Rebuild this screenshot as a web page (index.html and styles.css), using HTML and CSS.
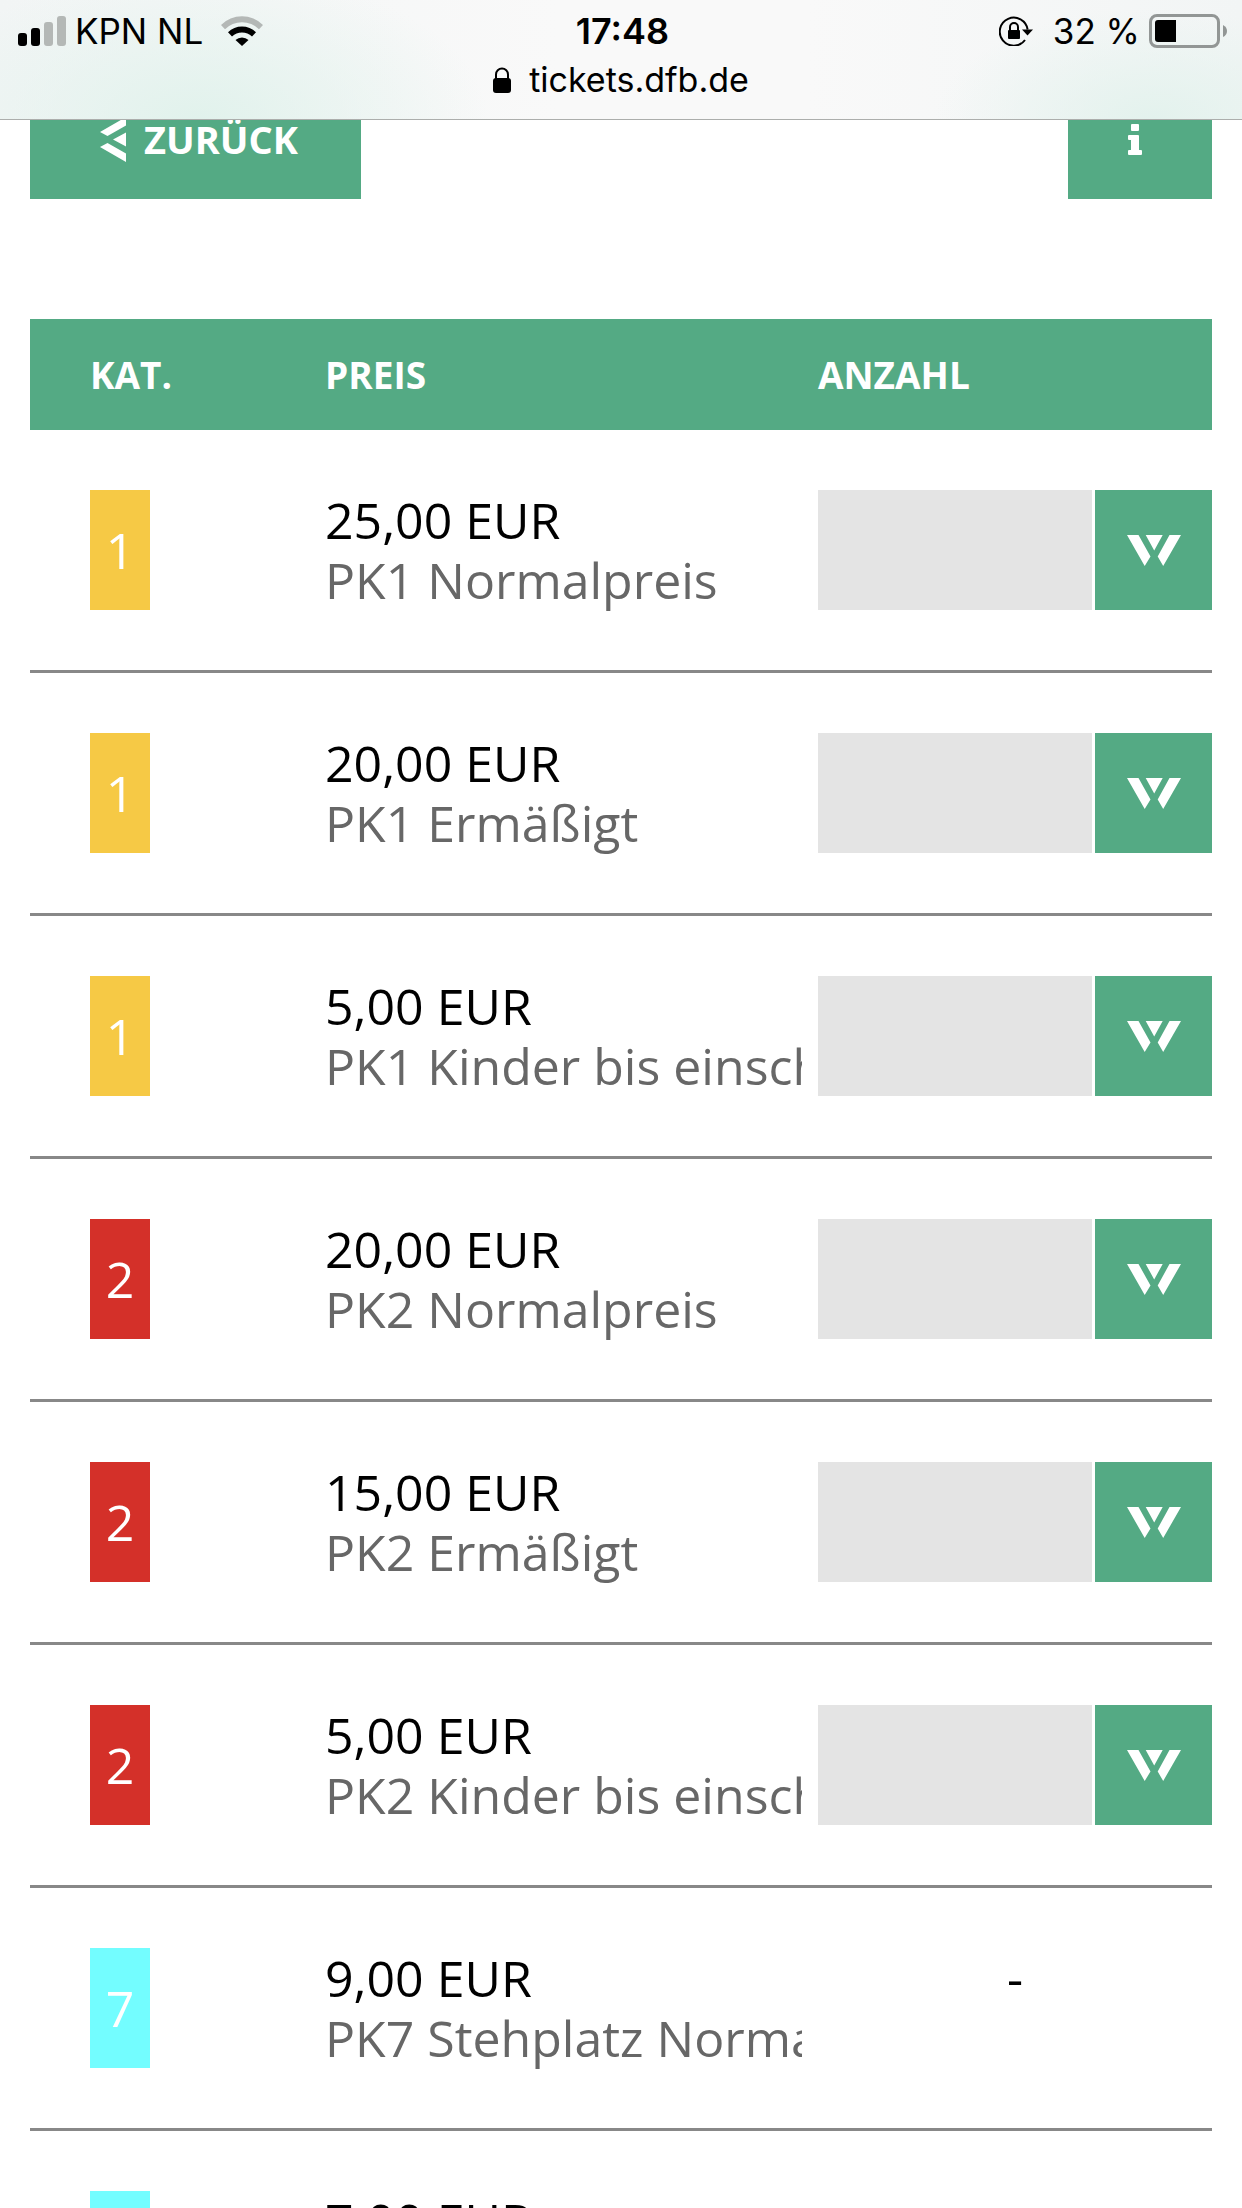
FILE: index.html
```html
<!DOCTYPE html>
<html lang="de">
<head>
  <meta charset="UTF-8" />
  <meta name="viewport" content="width=device-width, initial-scale=1.0" />
  <title>tickets.dfb.de</title>
  <link rel="stylesheet" href="styles.css">
</head>
<body>
  <svg class="sprite" aria-hidden="true">
    <symbol id="chevron-down" viewBox="0 0 54 31">
      <path d="M0 0H11.5L23.5 21.5L17.7 31ZM18.7 0H35.7L27.2 15.5ZM54 0H42.5L30.7 21.5L36.2 31Z" />
    </symbol>
  </svg>

  <header class="browser-bar">
    <div class="status">
      <div class="status-left">
        <svg class="signal" width="48" height="30" viewBox="0 0 48 30" aria-hidden="true">
          <rect x="0" y="17" width="9" height="13" rx="3" />
          <rect x="13" y="12" width="9" height="18" rx="3" />
          <rect class="dim" x="26" y="6" width="9" height="24" rx="3" />
          <rect class="dim" x="39" y="0" width="9" height="30" rx="3" />
        </svg>
        <span>KPN NL</span>
        <svg class="wifi" width="42" height="30" viewBox="0 0 42 30" aria-hidden="true">
          <path class="dim" d="M0 9A29.7 29.7 0 0 1 42 9L38 13.2A24 24 0 0 0 4 13.2Z" />
          <path d="M7 16.200A20 20 0 0 1 35 16.200L31 20.500A14.500 14.500 0 0 0 11 20.500Z" />
          <path d="M14.500 24A9.500 9.500 0 0 1 27.500 24L21 30Z" />
        </svg>
      </div>
      <time class="clock">17:48</time>
      <div class="status-right">
        <svg class="rotation" width="34" height="30" viewBox="0 0 34 30" aria-hidden="true">
          <path class="ring" d="M26 24A14 14 0 1 1 28.600 13.500" />
          <path d="M23 13.500H34L28.500 19.500Z" />
          <rect x="9" y="14" width="12" height="9" rx="1" />
          <path class="shackle" d="M11 14.500V11A4 4 0 0 1 19 11V14.500" />
        </svg>
        <span>32 %</span>
        <svg class="battery" width="78" height="34" viewBox="0 0 78 34" aria-hidden="true">
          <rect class="case" x="1.500" y="1.500" width="68" height="31" rx="6.500" />
          <path class="level" d="M9 6H27V28H9Q6 28 6 25V9Q6 6 9 6Z" />
          <path class="nub" d="M74 11Q78 13 78 17T74 23Z" />
        </svg>
      </div>
    </div>
    <div class="address">
      <svg width="18" height="26" viewBox="0 0 18 26" aria-hidden="true">
        <rect x="0" y="11" width="18" height="15" rx="3" />
        <path class="shackle" d="M3 12V7.500A6 6 0 0 1 15 7.500V12" />
      </svg>
      <span>tickets.dfb.de</span>
    </div>
  </header>

  <main>
    <nav class="toolbar">
      <button type="button" class="btn btn-back">
        <svg width="26" height="45" viewBox="0 0 26 45" aria-hidden="true">
          <path d="M0 15L26 0V8.500L7.500 19ZM13 22.500L26 15.500V29.500ZM0 30L7.500 26L26 36.500V45Z" />
        </svg>
        ZURÜCK
      </button>
      <button type="button" class="btn btn-info" aria-label="Info">
        <svg width="14" height="31" viewBox="0 0 14 31" aria-hidden="true">
          <path d="M4 0H10Q11 0 11 1V6Q11 7 10 7H4Q3 7 3 6V1Q3 0 4 0ZM1 11H10Q11 11 11 12V26H13Q14 26 14 27V30Q14 31 13 31H1Q0 31 0 30V27Q0 26 1 26H3V16H1Q0 16 0 15V12Q0 11 1 11Z" />
        </svg>
      </button>
    </nav>

    <table class="prices">
      <thead>
        <tr>
          <th class="col-kat">KAT.</th>
          <th class="col-preis">PREIS</th>
          <th class="col-anzahl">ANZAHL</th>
        </tr>
      </thead>
      <tbody>
        <tr>
          <td class="col-kat"><span class="kat kat-1">1</span></td>
          <td class="col-preis"><div class="price">25,00 EUR</div><div class="desc">PK1 Normalpreis</div></td>
          <td><div class="amount"><select aria-label="Anzahl PK1 Normalpreis"><option></option></select><span class="arrow"><svg><use href="#chevron-down" /></svg></span></div></td>
        </tr>
        <tr>
          <td class="col-kat"><span class="kat kat-1">1</span></td>
          <td class="col-preis"><div class="price">20,00 EUR</div><div class="desc">PK1 Ermäßigt</div></td>
          <td><div class="amount"><select aria-label="Anzahl PK1 Ermäßigt"><option></option></select><span class="arrow"><svg><use href="#chevron-down" /></svg></span></div></td>
        </tr>
        <tr>
          <td class="col-kat"><span class="kat kat-1">1</span></td>
          <td class="col-preis"><div class="price">5,00 EUR</div><div class="desc">PK1 Kinder bis einsch</div></td>
          <td><div class="amount"><select aria-label="Anzahl PK1 Kinder"><option></option></select><span class="arrow"><svg><use href="#chevron-down" /></svg></span></div></td>
        </tr>
        <tr>
          <td class="col-kat"><span class="kat kat-2">2</span></td>
          <td class="col-preis"><div class="price">20,00 EUR</div><div class="desc">PK2 Normalpreis</div></td>
          <td><div class="amount"><select aria-label="Anzahl PK2 Normalpreis"><option></option></select><span class="arrow"><svg><use href="#chevron-down" /></svg></span></div></td>
        </tr>
        <tr>
          <td class="col-kat"><span class="kat kat-2">2</span></td>
          <td class="col-preis"><div class="price">15,00 EUR</div><div class="desc">PK2 Ermäßigt</div></td>
          <td><div class="amount"><select aria-label="Anzahl PK2 Ermäßigt"><option></option></select><span class="arrow"><svg><use href="#chevron-down" /></svg></span></div></td>
        </tr>
        <tr>
          <td class="col-kat"><span class="kat kat-2">2</span></td>
          <td class="col-preis"><div class="price">5,00 EUR</div><div class="desc">PK2 Kinder bis einsch</div></td>
          <td><div class="amount"><select aria-label="Anzahl PK2 Kinder"><option></option></select><span class="arrow"><svg><use href="#chevron-down" /></svg></span></div></td>
        </tr>
        <tr>
          <td class="col-kat"><span class="kat kat-7">7</span></td>
          <td class="col-preis"><div class="price">9,00 EUR</div><div class="desc">PK7 Stehplatz Normal</div></td>
          <td class="none">-</td>
        </tr>
        <tr>
          <td class="col-kat"><span class="kat kat-7"></span></td>
          <td class="col-preis"><div class="price">7,00 EUR</div></td>
          <td></td>
        </tr>
      </tbody>
    </table>
  </main>
</body>
</html>
```
FILE: styles.css
```css
* {
  box-sizing: border-box;
}
body {
  margin: 0;
  background: #fff;
  color: #000;
  font-family: "Open Sans", sans-serif;
  font-size: 50px;
  line-height: 60px;
}
svg {
  display: block;
  fill: currentColor;
}
.sprite {
  position: absolute;
  width: 0;
  height: 0;
}

/* browser bar */
.browser-bar {
  position: fixed;
  top: 0;
  left: 0;
  right: 0;
  z-index: 10;
  height: 120px;
  padding-top: 6px;
  border-bottom: 1px solid #acaeac;
  background:
    radial-gradient(ellipse 290px 150px at 16% 100%, #e1f2ec, rgba(225, 242, 236, 0)),
    radial-gradient(ellipse 220px 110px at 93% 100%, #e3f2ed, rgba(227, 242, 237, 0)),
    linear-gradient(90deg, #f2f5f5, #f9f9f9 45%, #f9f9f9 65%, #f2f5f5);
  font-family: Inter, sans-serif;
  font-size: 35px;
  line-height: 48px;
}
.status {
  display: grid;
  grid-template-columns: 1fr auto 1fr;
  align-items: center;
  height: 50px;
  padding: 0 15px 0 18px;
}
.status-left,
.status-right {
  display: flex;
  align-items: center;
}
.status-right {
  justify-content: flex-end;
}
.signal {
  margin-right: 9px;
}
.wifi {
  margin-left: 18px;
}
.dim {
  fill: #b4b8b6;
}
.clock {
  font-size: 36px;
  font-weight: 600;
}
.rotation {
  margin-right: 20px;
}
.battery {
  margin-left: 9px;
}
.ring,
.shackle {
  fill: none;
  stroke: currentColor;
  stroke-width: 2;
}
.case {
  fill: none;
  stroke: #929695;
  stroke-width: 3;
}
.nub {
  fill: #929695;
}
.address {
  display: flex;
  align-items: center;
  justify-content: center;
  gap: 18px;
  height: 48px;
  font-size: 34px;
}

/* page */
main {
  padding: 79px 30px 0;
}
.toolbar {
  display: flex;
  justify-content: space-between;
  margin-bottom: 120px;
}
.btn {
  display: flex;
  align-items: center;
  height: 120px;
  border: 0;
  background: #54aa84;
  color: #fff;
  font-family: inherit;
  font-size: 38px;
  font-weight: 700;
  cursor: pointer;
}
.btn-back {
  gap: 18px;
  padding: 0 63px 0 70px;
}
.btn-info {
  padding: 0 70px 0 60px;
}

.prices {
  width: 100%;
  table-layout: fixed;
  border-spacing: 0;
}
th {
  height: 111px;
  padding: 0;
  background: #54aa84;
  color: #fff;
  font-size: 37px;
  text-align: left;
}
td {
  padding: 60px 0;
  border-bottom: 3px solid #888;
  vertical-align: top;
}
.col-kat {
  width: 295px;
  padding-left: 60px;
}
.col-preis {
  padding-right: 16px;
}
.col-anzahl {
  width: 33.3333%;
}
.kat {
  display: block;
  width: 60px;
  height: 120px;
  line-height: 120px;
  color: #fff;
  text-align: center;
}
.kat-1 {
  background: #f6c945;
}
.kat-2 {
  background: #d43029;
}
.kat-7 {
  background: #73fdff;
}
.price,
.desc {
  overflow-x: clip;
  white-space: nowrap;
}
.desc {
  color: #676767;
}
.none {
  text-align: center;
}

.amount {
  display: grid;
  grid-template-columns: 1fr 120px;
  height: 120px;
}
.amount select {
  grid-area: 1 / 1 / 2 / 3;
  width: 100%;
  height: 100%;
  padding: 0 140px 0 20px;
  border: 0;
  border-radius: 0;
  background: #e4e4e4;
  font: inherit;
  appearance: none;
}
.arrow {
  grid-area: 1 / 2;
  display: flex;
  align-items: center;
  justify-content: center;
  border-left: 3px solid #fff;
  background: #54aa84;
  color: #fff;
  pointer-events: none;
}
.arrow svg {
  width: 54px;
  height: 31px;
}
```
